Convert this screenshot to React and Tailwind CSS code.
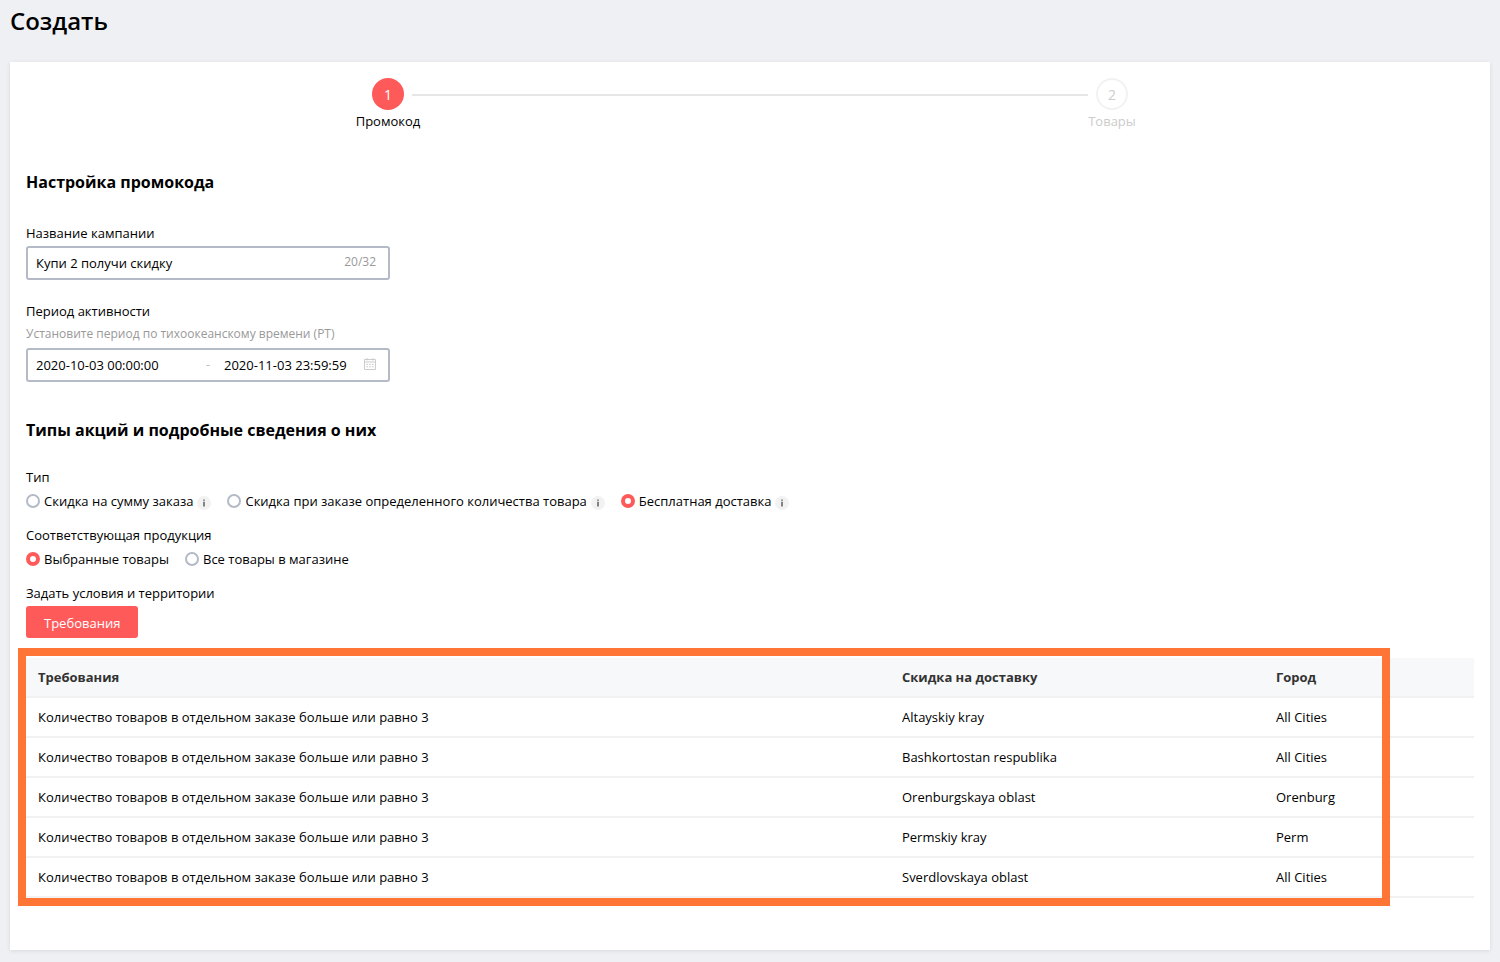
import { useState } from 'react';

const PROMO_TYPES = [
  { id: 'order-sum', label: 'Скидка на сумму заказа' },
  { id: 'order-count', label: 'Скидка при заказе определенного количества товара' },
  { id: 'free-shipping', label: 'Бесплатная доставка' },
];

const PRODUCT_SCOPES = [
  { id: 'selected', label: 'Выбранные товары' },
  { id: 'all', label: 'Все товары в магазине' },
];

const CONDITION = 'Количество товаров в отдельном заказе больше или равно 3';

const ROWS = [
  { region: 'Altayskiy kray', city: 'All Cities' },
  { region: 'Bashkortostan respublika', city: 'All Cities' },
  { region: 'Orenburgskaya oblast', city: 'Orenburg' },
  { region: 'Permskiy kray', city: 'Perm' },
  { region: 'Sverdlovskaya oblast', city: 'All Cities' },
];

export default function App() {
  const [name, setName] = useState('Купи 2 получи скидку');
  const [start, setStart] = useState('2020-10-03 00:00:00');
  const [end, setEnd] = useState('2020-11-03 23:59:59');
  const [type, setType] = useState('free-shipping');
  const [scope, setScope] = useState('selected');

  return (
    <div className="min-h-screen bg-[#eff0f4] px-[10px] pb-3 font-['Open_Sans',sans-serif] text-[13px] leading-[22px] text-black">
      <h1 className="pt-1 pb-6 text-2xl leading-[34px] font-semibold">Создать</h1>

      <main className="bg-white px-4 pt-4 pb-[52px] shadow-[0_1px_4px_rgba(0,0,0,0.1)]">
        <Steps />

        <h2 className="mt-[38px] text-base leading-6 font-bold">Настройка промокода</h2>

        <div className="mt-7 w-[364px] max-w-full">
          <label htmlFor="campaign" className="mb-[2px] block">Название кампании</label>
          <div className="flex h-[34px] items-center rounded-[3px] border-2 border-[#b4bac6] px-2">
            <input
              id="campaign"
              value={name}
              maxLength={32}
              onChange={(e) => setName(e.target.value)}
              className="min-w-0 flex-1 outline-none"
            />
            <span className="mr-1 pb-[2px] text-xs leading-5 text-[#999]">{name.length}/32</span>
          </div>
        </div>

        <div className="mt-5 w-[364px] max-w-full">
          <label htmlFor="period-start" className="mb-[2px] block">Период активности</label>
          <p className="mb-1 text-xs leading-5 text-[#999]">
            Установите период по тихоокеанскому времени (PT)
          </p>
          <div className="flex h-[34px] items-center rounded-[3px] border-2 border-[#b4bac6] px-2">
            <input
              id="period-start"
              value={start}
              onChange={(e) => setStart(e.target.value)}
              className="w-[164px] outline-none"
            />
            <span className="w-6 pb-[2px] pl-[6px] text-[#bbb]">-</span>
            <input
              aria-label="Период активности"
              value={end}
              onChange={(e) => setEnd(e.target.value)}
              className="min-w-0 flex-1 outline-none"
            />
            <CalendarIcon />
          </div>
        </div>

        <h2 className="mt-9 text-base leading-6 font-bold">Типы акций и подробные сведения о них</h2>

        <RadioGroup title="Тип" name="type" options={PROMO_TYPES} value={type} onChange={setType} info first />
        <RadioGroup
          title="Соответствующая продукция"
          name="scope"
          options={PRODUCT_SCOPES}
          value={scope}
          onChange={setScope}
        />

        <div className="mt-3">
          <p className="mb-[2px]">Задать условия и территории</p>
          <button type="button" className="block h-8 rounded-[3px] bg-[#ff5a5a] px-[18px] pt-[2px] text-white">
            Требования
          </button>
        </div>

        <div className="relative mt-5">
          <table className="w-full table-fixed border-separate border-spacing-0 text-left">
            <thead>
              <tr className="bg-[#f7f8fa] text-[#333]">
                <Th className="w-[864px]">Требования</Th>
                <Th className="w-[374px]">Скидка на доставку</Th>
                <Th>Город</Th>
              </tr>
            </thead>
            <tbody>
              {ROWS.map((row) => (
                <tr key={row.region}>
                  <Td>{CONDITION}</Td>
                  <Td>{row.region}</Td>
                  <Td>{row.city}</Td>
                </tr>
              ))}
            </tbody>
          </table>
          {/* highlight frame over the table */}
          <div className="pointer-events-none absolute -top-[10px] right-[84px] -bottom-2 -left-2 border-8 border-[#ff7535]" />
        </div>
      </main>
    </div>
  );
}

function Steps() {
  return (
    <ol className="grid grid-cols-2 text-center">
      <li>
        <div className="flex items-center gap-2">
          <span className="flex-1" />
          <span className="size-8 rounded-full bg-[#ff5a5a] text-sm leading-[34px] text-white">1</span>
          <span className="mt-[2px] h-[2px] flex-1 bg-[#e6e6e6]" />
        </div>
        <p>Промокод</p>
      </li>
      <li className="text-[#ccc]">
        <div className="flex items-center gap-2">
          <span className="mt-[2px] h-[2px] flex-1 bg-[#e6e6e6]" />
          <span className="size-8 rounded-full border-2 border-[#f2f2f2] text-sm leading-[30px]">2</span>
          <span className="flex-1" />
        </div>
        <p>Товары</p>
      </li>
    </ol>
  );
}

function RadioGroup({ title, name, options, value, onChange, info, first }) {
  return (
    <fieldset className={first ? 'mt-6' : 'mt-3'}>
      <legend className="mb-[2px]">{title}</legend>
      <div className="flex flex-wrap gap-x-4">
        {options.map((option) => (
          <div key={option.id} className="flex items-center gap-1">
            <label className="flex items-center gap-1">
              <input
                type="radio"
                name={name}
                checked={value === option.id}
                onChange={() => onChange(option.id)}
                className="size-[14px] appearance-none rounded-full border-2 border-[#b4bac6] checked:border-4 checked:border-[#ff5a5a]"
              />
              {option.label}
            </label>
            {info && <InfoIcon />}
          </div>
        ))}
      </div>
    </fieldset>
  );
}

function Th({ children, className }) {
  return <th className={`border-b-2 border-[#f2f2f2] px-3 py-2 font-bold ${className || ''}`}>{children}</th>;
}

function Td({ children }) {
  return <td className="border-b-2 border-[#f2f2f2] px-3 py-2">{children}</td>;
}

// ---------------------------------------------------------------------------
// Icons
// ---------------------------------------------------------------------------
function InfoIcon() {
  return (
    <svg viewBox="0 0 14 14" className="mt-[3px] size-[14px]" aria-hidden="true">
      <circle cx="7" cy="7" r="7" fill="#f2f2f2" />
      <path d="M6.2 3.4h1.6v1.4H6.2zM6.2 5.8h1.6v4.7H6.2z" fill="#666" />
    </svg>
  );
}

function CalendarIcon() {
  return (
    <svg viewBox="0 0 12 12" className="mr-1 mb-[2px] size-3" fill="none" stroke="#ccc" aria-hidden="true">
      <path d="M.5 1.5h11v10H.5zM.5 4h11M3 0v2.5M9 0v2.5" />
      <path d="M2.3 6.4h1.8M5.1 6.4h1.8M7.9 6.4h1.8M2.3 8.8h1.8M5.1 8.8h1.8M7.9 8.8h1.8" />
    </svg>
  );
}
